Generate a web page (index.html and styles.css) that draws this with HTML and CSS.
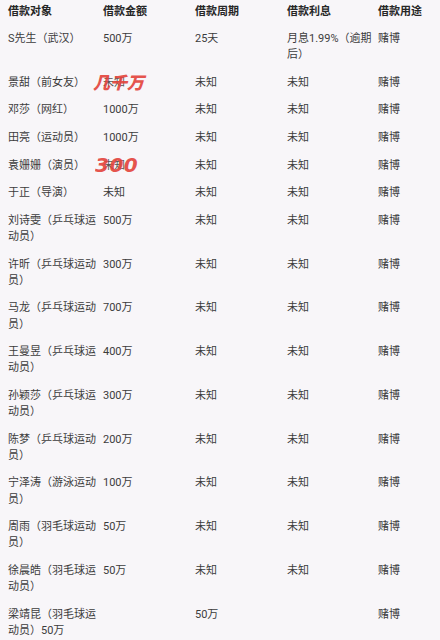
FILE: index.html
```html
<!DOCTYPE html>
<html lang="zh">
<head>
<meta charset="utf-8">
<link rel="stylesheet" href="styles.css">
</head>
<body>
<div class="table">
  <div class="cell head">借款对象</div><div class="cell head">借款金额</div><div class="cell head">借款周期</div><div class="cell head">借款利息</div><div class="cell head">借款用途</div>

  <div class="cell">S先生（武汉）</div><div class="cell">500万</div><div class="cell">25天</div><div class="cell">月息1.99%（逾期后）</div><div class="cell">赌博</div>

  <div class="cell">景甜（前女友）</div><div class="cell amt"><span class="under">未知</span><span class="stamp stamp-a">几千万</span></div><div class="cell">未知</div><div class="cell">未知</div><div class="cell">赌博</div>

  <div class="cell">邓莎（网红）</div><div class="cell">1000万</div><div class="cell">未知</div><div class="cell">未知</div><div class="cell">赌博</div>

  <div class="cell">田亮（运动员）</div><div class="cell">1000万</div><div class="cell">未知</div><div class="cell">未知</div><div class="cell">赌博</div>

  <div class="cell">袁姗姗（演员）</div><div class="cell amt"><span class="under">未知</span><span class="stamp stamp-b">300</span></div><div class="cell">未知</div><div class="cell">未知</div><div class="cell">赌博</div>

  <div class="cell">于正（导演）</div><div class="cell">未知</div><div class="cell">未知</div><div class="cell">未知</div><div class="cell">赌博</div>

  <div class="cell">刘诗雯（乒乓球运动员）</div><div class="cell">500万</div><div class="cell">未知</div><div class="cell">未知</div><div class="cell">赌博</div>

  <div class="cell">许昕（乒乓球运动员）</div><div class="cell">300万</div><div class="cell">未知</div><div class="cell">未知</div><div class="cell">赌博</div>

  <div class="cell">马龙（乒乓球运动员）</div><div class="cell">700万</div><div class="cell">未知</div><div class="cell">未知</div><div class="cell">赌博</div>

  <div class="cell">王曼昱（乒乓球运动员）</div><div class="cell">400万</div><div class="cell">未知</div><div class="cell">未知</div><div class="cell">赌博</div>

  <div class="cell">孙颖莎（乒乓球运动员）</div><div class="cell">300万</div><div class="cell">未知</div><div class="cell">未知</div><div class="cell">赌博</div>

  <div class="cell">陈梦（乒乓球运动员）</div><div class="cell">200万</div><div class="cell">未知</div><div class="cell">未知</div><div class="cell">赌博</div>

  <div class="cell">宁泽涛（游泳运动员）</div><div class="cell">100万</div><div class="cell">未知</div><div class="cell">未知</div><div class="cell">赌博</div>

  <div class="cell">周雨（羽毛球运动员）</div><div class="cell">50万</div><div class="cell">未知</div><div class="cell">未知</div><div class="cell">赌博</div>

  <div class="cell">徐晨皓（羽毛球运动员）</div><div class="cell">50万</div><div class="cell">未知</div><div class="cell">未知</div><div class="cell">赌博</div>

  <div class="cell">梁靖昆（羽毛球运动员）50万</div><div class="cell"></div><div class="cell">50万</div><div class="cell"></div><div class="cell">赌博</div>
</div>
</body>
</html>
```
FILE: styles.css
```css
html, body {
  margin: 0;
  padding: 0;
  background: #f8f6f9;
}
body {
  font-family: Roboto, "Noto Sans CJK SC", sans-serif;
  font-size: 11px;
  color: #3c3c3c;
  overflow: hidden;
}
.table {
  display: grid;
  grid-template-columns: 95px 92px 92px 91px 1fr;
  padding-left: 8px;
}
.cell {
  padding: 5.7px 4px 5.7px 0;
  line-height: 16.2px;
  word-break: break-all;
}
.head {
  padding-top: 3.7px;
  padding-bottom: 5.5px;
  font-weight: bold;
  color: #262626;
}
.amt {
  position: relative;
}
.under {
  color: #555;
}
.stamp {
  position: absolute;
  font-style: italic;
  font-weight: bold;
  color: #e3433b;
  white-space: nowrap;
  opacity: 0.9;
}
.stamp-a {
  left: -10px;
  top: 3px;
  font-size: 17px;
  line-height: 20px;
  font-family: "Noto Sans CJK SC", sans-serif;
  font-weight: 900;
}
.stamp-b {
  left: -8px;
  top: 3px;
  font-size: 20px;
  line-height: 20px;
  font-family: "DejaVu Sans", sans-serif;
  letter-spacing: 0.5px;
}
```
